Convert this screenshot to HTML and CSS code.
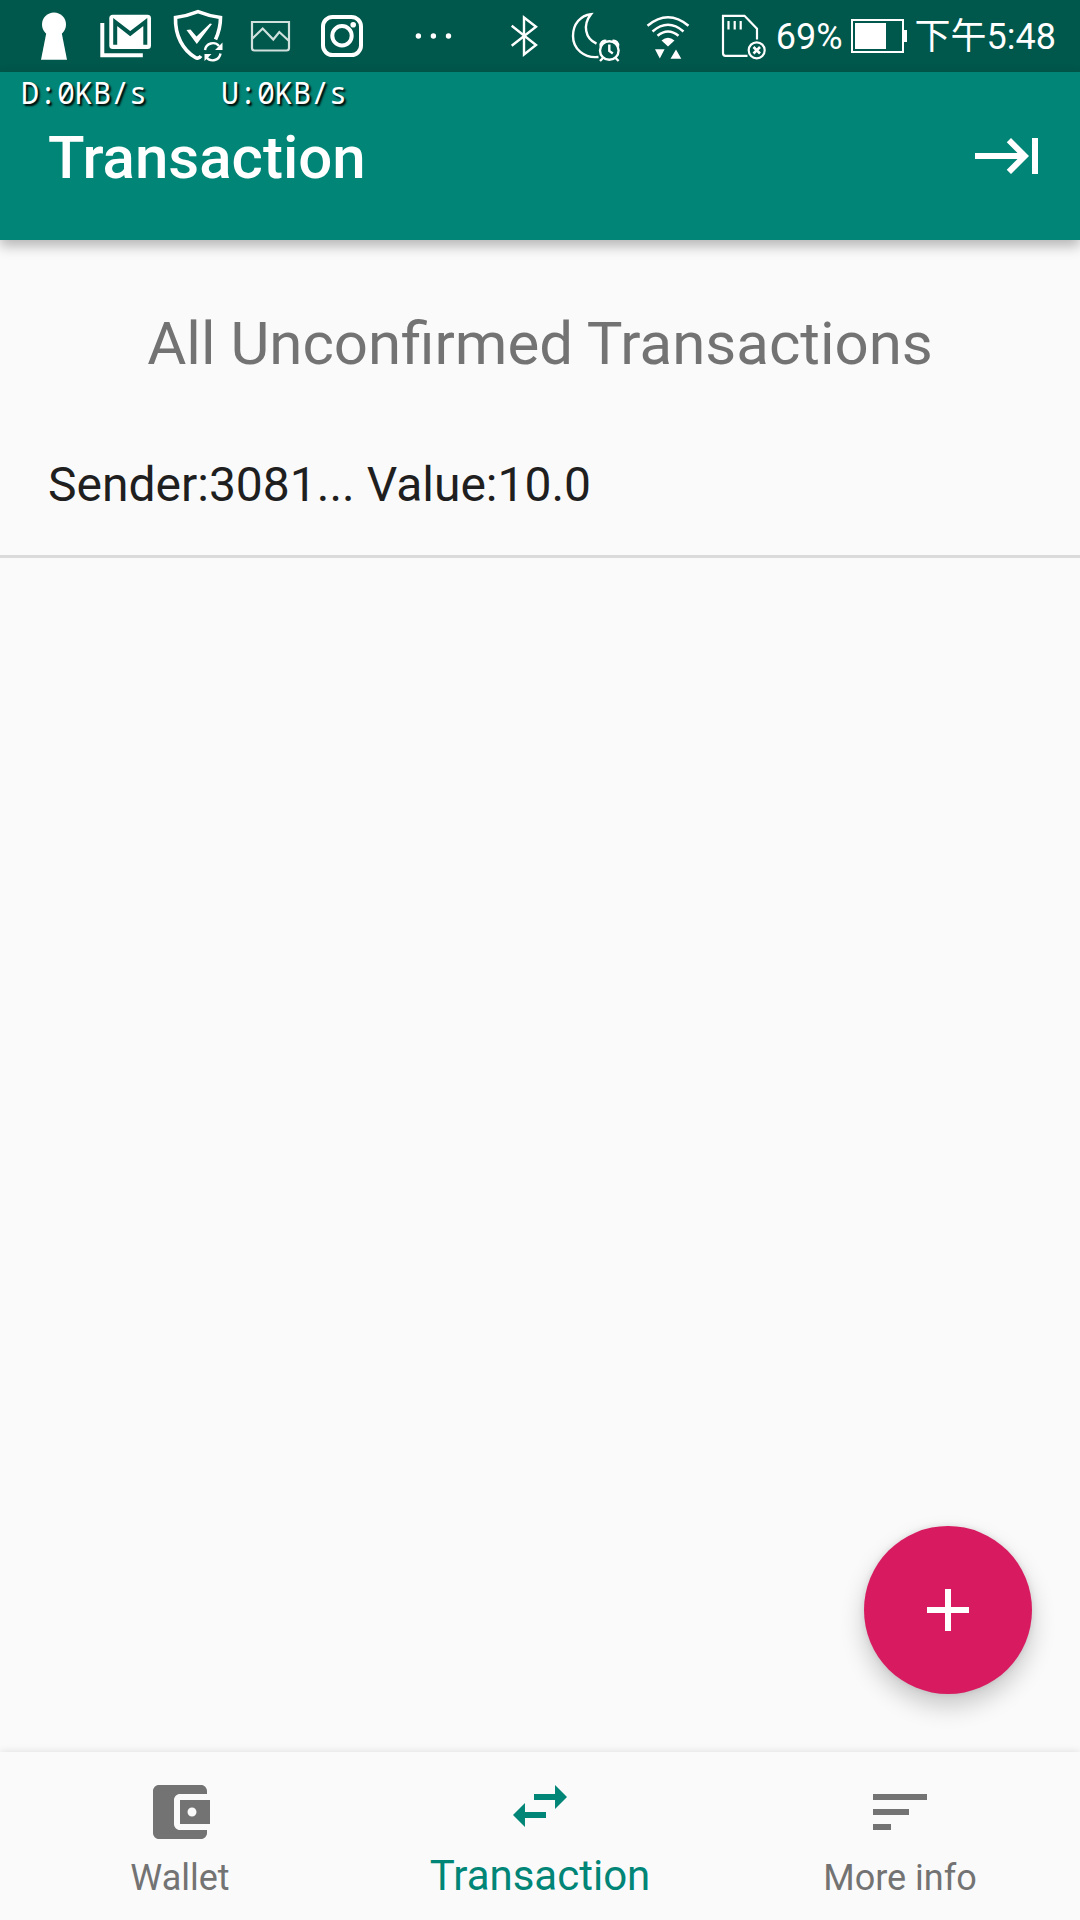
FILE: index.html
```html
<!DOCTYPE html>
<html lang="en">
<head>
<meta charset="utf-8">
<meta name="viewport" content="width=device-width, initial-scale=1">
<title>Transaction</title>
<link rel="stylesheet" href="styles.css">
</head>
<body>
<div class="app">
  <div class="status-bar">
    <div class="status-group">
      <svg class="status-icon" viewBox="0 0 72 72" aria-hidden="true">
        <circle cx="36" cy="24.5" r="12" fill="#fff"/>
        <path d="M28.5 32h15l5.500 27.700H23z" fill="#fff"/>
      </svg>
      <svg class="status-icon" viewBox="0 0 72 72" aria-hidden="true">
        <path d="M12.300 23v32.200h40.500" fill="none" stroke="#fff" stroke-width="4"/>
        <rect x="19.300" y="14.700" width="41.700" height="34.300" rx="3.500" fill="#fff"/>
        <path d="M25.200 44.700V22l15 11.700L55.300 22v22.700" fill="none" stroke="#00574b" stroke-width="4"/>
      </svg>
      <svg class="status-icon" viewBox="0 0 72 72" aria-hidden="true">
        <path d="M53.500 39.500C57.500 31 58.500 26 58.500 17.500 50 16.500 43 14.500 36 11.700 29 14.500 22 16.500 13.500 17.500 13 36 21 50 33 57.200Q36.500 59.500 39 56" fill="none" stroke="#fff" stroke-width="3.600"/>
        <path d="M24.500 30l4-.5 6 7L48 23.500l2 .5-15.200 20z" fill="#fff"/>
        <path d="M43 50a8 8 0 0 1 14-4M58.500 53.500a8 8 0 0 1-14 4" fill="none" stroke="#fff" stroke-width="2.400"/>
        <path d="M60.500 42.500v7.500h-7.500zM42.500 61v-7h7z" fill="#fff"/>
      </svg>
      <svg class="status-icon" viewBox="0 0 72 72" aria-hidden="true">
        <path d="M18 22h37V48q0 2.500-2.500 2.500h-32Q18 50.500 18 48zM18 39l10.700-10.500 10.600 11 6-7.500 9.700 9" fill="none" stroke="#cfe0dd" stroke-width="2.200"/>
      </svg>
      <svg class="status-icon" viewBox="0 0 72 72" aria-hidden="true">
        <rect x="17" y="17" width="38" height="38" rx="9.500" fill="none" stroke="#fff" stroke-width="4"/>
        <circle cx="36" cy="35.800" r="9.700" fill="none" stroke="#fff" stroke-width="4"/>
        <circle cx="47.200" cy="24.800" r="2.800" fill="#fff"/>
      </svg>
    </div>
    <svg class="status-icon" viewBox="0 0 72 72" aria-hidden="true">
      <g fill="#fff"><circle cx="21.400" cy="36" r="2.700"/><circle cx="36.400" cy="36" r="2.700"/><circle cx="51.500" cy="36" r="2.700"/></g>
    </svg>
    <div class="status-group">
      <svg class="status-icon" viewBox="0 0 72 72" aria-hidden="true">
        <path d="M23.700 25.700L48 45 36 54.500V17.500l12 9.300-24.300 19" fill="none" stroke="#fff" stroke-width="2.400"/>
      </svg>
      <svg class="status-icon" viewBox="0 0 72 72" aria-hidden="true">
        <g fill="none" stroke="#fff" stroke-width="2.400">
          <path d="M38.500 57C24 58.500 13 49 13 36 13 24 20.500 15.500 31 14.300 22.500 25 25 38.500 36.500 43.700"/>
          <circle cx="49.300" cy="50.500" r="9.300"/>
          <path d="M49.300 44.500v6.500l3.500 2.500M43 58l-3 3M55.600 58l3 3"/>
          <path d="M40.700 46.500a4.500 4.500 0 0 1 5.500-5.500M58 46.500a4.500 4.500 0 0 0-5.500-5.500"/>
        </g>
      </svg>
      <svg class="status-icon" viewBox="0 0 72 72" aria-hidden="true">
        <path d="M15.500 25.700q20.500-17 41 0M20.500 31.500q15.500-13.500 31 0M25.500 35.800q10.500-8.500 21 0" fill="none" stroke="#fff" stroke-width="2.500"/>
        <path d="M29.500 40.500q6.500-5.500 13 0L36 46.500zM23 49.300h9.600L27.800 58.600zM38.500 58.700h10.800L44 49.400z" fill="#fff"/>
      </svg>
      <svg class="status-icon" viewBox="0 0 72 72" aria-hidden="true">
        <g fill="none" stroke="#fff" stroke-width="2.200">
          <path d="M43.500 55.800H21.500q-2.500 0-2.500-2.500V15.800h21.500L53 28.800V39.500M24.500 21v8.500M30.700 21v8.500M36.700 21v8.500"/>
          <circle cx="52.700" cy="50.300" r="8"/>
          <path d="M49.500 47l6.500 6.500M56 47l-6.500 6.500" stroke-width="2.600"/>
        </g>
      </svg>
      <div class="status-info">
        <span>69%</span>
        <svg class="battery" viewBox="0 0 56 72" aria-hidden="true">
          <rect x="1" y="20" width="51" height="32" fill="none" stroke="#fff" stroke-width="2"/>
          <path d="M4 23h31v26H4zM53 30h3v12h-3z" fill="#fff"/>
        </svg>
        <span>下午5:48</span>
      </div>
    </div>
  </div>

  <header class="app-bar">
    <div class="net-speed"><span>D:0KB/s</span><span>U:0KB/s</span></div>
    <h1 class="app-title">Transaction</h1>
    <button class="icon-button" type="button" aria-label="Next">
      <svg class="icon" viewBox="0 0 24 24" aria-hidden="true"><path d="M11.590 7.410L15.170 11H1v2h14.170l-3.590 3.590L13 18l6-6-6-6-1.410 1.410zM20 6v12h2V6h-2z"/></svg>
    </button>
  </header>

  <main class="content">
    <h2 class="section-title">All Unconfirmed Transactions</h2>
    <ul class="list">
      <li class="list-row">Sender:3081... Value:10.0</li>
    </ul>
    <button class="fab" type="button" aria-label="Add transaction">
      <svg class="icon" viewBox="0 0 24 24" aria-hidden="true"><path d="M19 13h-6v6h-2v-6H5v-2h6V5h2v6h6v2z"/></svg>
    </button>
  </main>

  <nav class="bottom-nav">
    <a class="nav-item" href="#wallet">
      <svg class="icon" viewBox="0 0 24 24" aria-hidden="true"><path d="M21 18v1c0 1.100-.9 2-2 2H5c-1.110 0-2-.9-2-2V5c0-1.100.89-2 2-2h14c1.100 0 2 .9 2 2v1h-9c-1.110 0-2 .9-2 2v8c0 1.100.89 2 2 2h9zm-9-2h10V8H12v8zm4-2.500c-.83 0-1.500-.67-1.500-1.500s.67-1.500 1.500-1.500 1.500.67 1.500 1.500-.67 1.500-1.500 1.500z"/></svg>
      <span>Wallet</span>
    </a>
    <a class="nav-item nav-item-active" href="#transaction" aria-current="page">
      <svg class="icon" viewBox="0 0 24 24" aria-hidden="true"><path d="M6.990 11L3 15l3.990 4v-3H14v-2H6.990v-3zM21 9l-3.990-4v3H10v2h7.010v3L21 9z"/></svg>
      <span>Transaction</span>
    </a>
    <a class="nav-item" href="#more">
      <svg class="icon" viewBox="0 0 24 24" aria-hidden="true"><path d="M3 18h6v-2H3v2zM3 6v2h18V6H3zm0 7h12v-2H3v2z"/></svg>
      <span>More info</span>
    </a>
  </nav>
</div>
</body>
</html>
```

FILE: styles.css
```css
* {
  box-sizing: border-box;
}

body {
  margin: 0;
  background: #fafafa;
  color: #1f1f1f;
  font-family: Roboto, "Noto Sans CJK TC", sans-serif;
}

button {
  padding: 0;
  border: 0;
  background: none;
  color: inherit;
  font: inherit;
}

svg {
  display: block;
  flex: none;
}

.app {
  display: flex;
  flex-direction: column;
  min-height: 100vh;
}

.icon {
  width: 72px;
  height: 72px;
  fill: currentColor;
}

/* System status bar */
.status-bar {
  display: flex;
  align-items: center;
  justify-content: space-between;
  height: 72px;
  padding: 0 24px 0 18px;
  background: #00574b;
  color: #fff;
}

.status-group {
  display: flex;
}

.status-icon {
  width: 72px;
  height: 72px;
}

.status-info {
  display: flex;
  align-items: center;
  gap: 8px;
  font-size: 36px;
  line-height: 48px;
  white-space: nowrap;
}

.status-info span {
  padding-top: 2px;
}

.battery {
  width: 56px;
  height: 72px;
}

/* App bar */
.app-bar {
  position: relative;
  z-index: 1;
  display: flex;
  align-items: center;
  justify-content: space-between;
  height: 168px;
  padding: 0 36px 0 48px;
  background: #008577;
  color: #fff;
  box-shadow: 0 6px 12px rgba(0, 0, 0, 0.28);
}

.net-speed {
  position: absolute;
  top: 3px;
  left: 21px;
  display: flex;
  gap: 74px;
  font-family: "Noto Sans Mono", "DejaVu Sans Mono", monospace;
  font-size: 30px;
  line-height: 36px;
  text-shadow: 2px 2px 2px #000;
}

.app-title {
  margin: 0;
  padding-top: 4px;
  font-size: 60px;
  font-weight: 500;
  line-height: 72px;
}

/* Content */
.content {
  position: relative;
  flex: 1;
}

.section-title {
  margin: 0;
  padding: 68px 48px 34px;
  color: #737373;
  font-size: 60px;
  font-weight: 400;
  line-height: 72px;
  text-align: center;
}

.list {
  margin: 0;
  padding: 0;
  list-style: none;
}

.list-row {
  display: flex;
  align-items: center;
  min-height: 144px;
  padding: 0 48px;
  border-bottom: 3px solid #dadada;
  font-size: 48px;
  line-height: 60px;
}

.fab {
  position: absolute;
  right: 48px;
  bottom: 58px;
  display: flex;
  align-items: center;
  justify-content: center;
  width: 168px;
  height: 168px;
  border-radius: 50%;
  background: #d81b60;
  color: #fff;
  box-shadow: 0 12px 24px rgba(0, 0, 0, 0.2), 0 0 6px rgba(0, 0, 0, 0.1);
}

/* Bottom navigation */
.bottom-nav {
  display: grid;
  grid-template-columns: repeat(3, 1fr);
  height: 168px;
  background: #fafafa;
  box-shadow: 0 0 8px rgba(0, 0, 0, 0.12);
}

.nav-item {
  display: flex;
  flex-direction: column;
  align-items: center;
  gap: 6px;
  padding-top: 24px;
  color: #737373;
  font-size: 36px;
  line-height: 48px;
  text-decoration: none;
}

.nav-item-active {
  gap: 10px;
  padding-top: 18px;
  color: #008577;
  font-size: 42px;
}
```
